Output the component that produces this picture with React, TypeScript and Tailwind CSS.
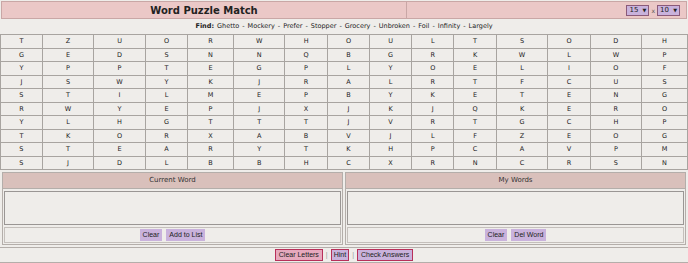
import React from 'react';

const grid = [
  'TZUORWHOULTSODH',
  'GEDSNNQBGRKWLWP',
  'YPPTEGPLYOELIOF',
  'JSWYKJRALRTFCUS',
  'STILMEPBYKETENG',
  'RWYEPJXJKJQKERO',
  'YLHGTTTJVRTGCHP',
  'TKORXABVJLFZEOG',
  'STEARYTKHPCAVPM',
  'SJDLBBHCXRNCRSN',
];

const words = ['Ghetto', 'Mockery', 'Prefer', 'Stopper', 'Grocery', 'Unbroken', 'Foil', 'Infinity', 'Largely'];

function Select({ value }: { value: string }) {
  return (
    <div className="flex h-[11px] w-[23px] items-center justify-between border border-[#8a5a7a] bg-[#c9b2dc] px-[2px] text-[7px] leading-none text-[#222]">
      <span>{value}</span>
      <span className="text-[5px]">▼</span>
    </div>
  );
}

function Panel({ title, action }: { title: string; action: string }) {
  return (
    <div className="flex flex-1 flex-col border border-[#b4aeaa]">
      <div className="flex h-[16px] items-center justify-center border-b border-[#b4aeaa] bg-[#d9c0bb] text-[7px] text-[#333]">
        {title}
      </div>
      <div className="px-[1px] pb-[2px] pt-[2px]">
        <div className="h-[34px] w-full border border-[#9a9694] bg-[#efedea]" />
      </div>
      <div className="mx-[1px] mb-[1px] flex h-[16px] items-center justify-center gap-[4px] border border-[#c4bfbb] font-['Liberation_Sans',sans-serif] text-[7px] text-[#222]">
        <span className="bg-[#c9b2dc] px-[3px] py-[1px]">Clear</span>
        <span className="bg-[#c9b2dc] px-[3px] py-[1px]">{action}</span>
      </div>
    </div>
  );
}

export default function App() {
  return (
    <div className="h-[263px] w-[688px] overflow-hidden bg-[#efedea] font-['DejaVu_Sans',sans-serif] text-[#222]">
      <div className="mx-[1px] mt-[1px] flex h-[18px] border border-[#c9a7a6] bg-[#ebc8c7]">
        <div className="flex w-[405px] items-center justify-center border-r border-[#c9a7a6] text-[10px] font-bold text-[#222]">
          Word Puzzle Match
        </div>
        <div className="flex flex-1 items-center justify-end gap-[2px] pr-[6px]">
          <Select value="15" />
          <span className="text-[6px] text-[#555]">x</span>
          <Select value="10" />
        </div>
      </div>

      <div className="flex h-[15px] items-center justify-center text-[6.5px]">
        <span className="mr-[3px] font-bold">Find:</span>
        {words.map((w, i) => (
          <span key={w}>
            {w}
            {i < words.length - 1 && <span className="mx-[3px]">-</span>}
          </span>
        ))}
      </div>

      <table className="w-full border-collapse border border-[#a8a4a0] text-[6.5px]">
        <tbody>
          {grid.map((row, r) => (
            <tr key={r} className="h-[13.5px]">
              {row.split('').map((c, i) => (
                <td key={i} className="border border-[#a8a4a0] p-0 text-center leading-none">
                  {c}
                </td>
              ))}
            </tr>
          ))}
        </tbody>
      </table>

      <div className="mt-[2px] flex gap-[2px] px-[2px]">
        <Panel title="Current Word" action="Add to List" />
        <Panel title="My Words" action="Del Word" />
      </div>

      <div className="mt-[2px] flex h-[16px] items-center justify-center gap-[3px] border-y border-[#b4aeaa] font-['Liberation_Sans',sans-serif] text-[7px] text-[#222]">
        <span className="border border-[#b8305a] bg-[#e6a9bd] px-[3px]">Clear Letters</span>
        <span className="text-[#999]">|</span>
        <span className="border border-[#b8305a] bg-[#c9b2dc] px-[2px]">Hint</span>
        <span className="text-[#999]">|</span>
        <span className="border border-[#b8305a] bg-[#c9b2dc] px-[3px]">Check Answers</span>
      </div>
    </div>
  );
}
